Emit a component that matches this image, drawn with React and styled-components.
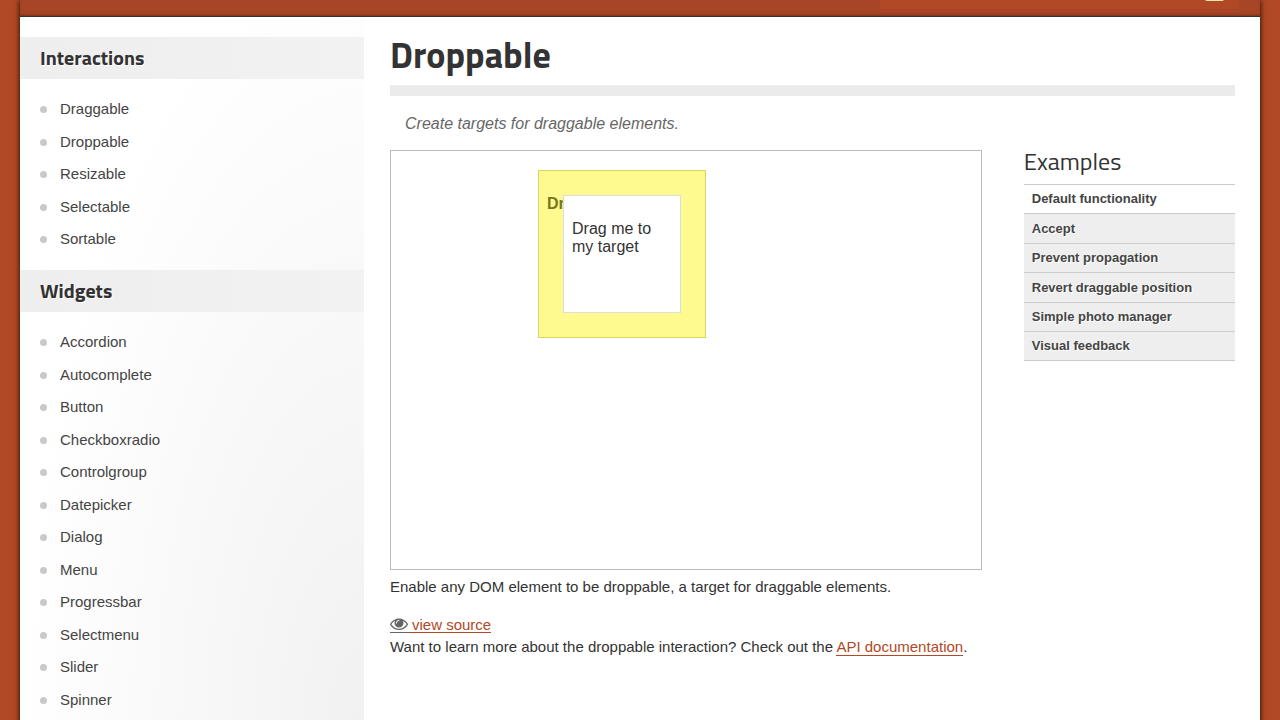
import React from "react";
import styled, { createGlobalStyle } from "styled-components";

const GlobalStyle = createGlobalStyle`
  * { box-sizing: border-box; }
  body {
    margin: 0;
    background: #b24926;
    color: #333;
    font: 15px/22px "Liberation Sans", Arial, sans-serif;
  }
  h1, h2, h3, p, ul { margin: 0; padding: 0; }
  ul { list-style: none; }
`;

const display = `"Titillium Web", Roboto, "Liberation Sans", sans-serif`;

const Container = styled.div`
  display: flex;
  flex-direction: column;
  min-height: 100vh;
  margin: 0 20px;
  box-shadow: 0 0 6px rgba(0, 0, 0, 0.9);
`;

const Header = styled.header`
  display: flex;
  justify-content: flex-end;
  height: 17px;
  padding-right: 21px;
  background: #a74526;
  border-bottom: 1px solid #333;
  box-shadow: inset 0 -2px 3px -1px rgba(60, 20, 0, 0.4);
`;

const SearchPanel = styled.div`
  display: flex;
  justify-content: flex-end;
  width: 359px;
  height: 9px;
  padding-right: 15px;
  background: #b24926;
  border-radius: 0 0 4px 4px;
`;

const Content = styled.div`
  display: flex;
  flex: 1;
  background: #fff;
`;

const Sidebar = styled.aside`
  flex: 0 0 344px;
  padding-top: 20px;
  background: radial-gradient(ellipse 344px 780px at 100% 100%, #f1f1f1, #fff);
`;

const SideHeading = styled.h3`
  padding: 0 20px;
  background: linear-gradient(90deg, #eee, #f2f2f2);
  font: bold 20px/42px ${display};
  text-shadow: 1px 1px 0 #fff;
`;

const SideList = styled.ul`
  display: flex;
  flex-direction: column;
  gap: 10px;
  padding: 19px 20px;
`;

const SideItem = styled.li`
  display: flex;
  align-items: center;
  gap: 13px;

  &:nth-child(odd) { margin-bottom: 1px; }

  &::before {
    content: "";
    width: 7px;
    height: 7px;
    border-radius: 50%;
    background: #c9c9c9;
  }
`;

const SideLink = styled.a`
  color: #444;
  text-decoration: none;
`;

const Main = styled.main`
  flex: 1;
  min-width: 0;
  padding: 16px 25px 20px 26px;
`;

const Title = styled.h1`
  padding-bottom: 8px;
  border-bottom: 11px solid #ebebeb;
  font: bold 36px/44px ${display};
`;

const Intro = styled.p`
  padding: 17px 15px 15px;
  color: #666;
  font-size: 16px;
  font-style: italic;
`;

const Columns = styled.div`
  display: flex;
  justify-content: space-between;
  align-items: flex-start;
`;

const DemoFrame = styled.section`
  position: relative;
  width: 70%;
  height: 420px;
  padding: 19px 147px;
  border: 1px solid #bbb;
  font-size: 16px;
  line-height: 18px;
`;

const DropTarget = styled.div`
  width: 168px;
  height: 168px;
  padding: 24px 8px;
  border: 1px solid #dad55e;
  background: #fffa90;
  color: #777620;
  font-weight: bold;
`;

const DragBox = styled.div`
  position: absolute;
  top: 44px;
  left: 172px;
  width: 118px;
  height: 118px;
  padding: 24px 8px;
  border: 1px solid #ddd;
  background: #fff;
  color: #333;
`;

const Examples = styled.nav`
  width: 25%;
`;

const ExamplesTitle = styled.h2`
  font: 400 24px/22px ${display};
  padding-bottom: 12px;
`;

const ExamplesList = styled.ul`
  border-top: 1px solid #ccc;
`;

const ExampleItem = styled.li`
  padding: 0 8px;
  border-bottom: 1px solid #ccc;
  background: ${(p) => (p.$active ? "#fff" : "#eee")};
  font-size: 13px;
  font-weight: bold;
  line-height: 28px;
  text-shadow: 1px 1px 0 #fff;

  &:nth-child(even):not(:last-child) { line-height: 29px; }
`;

const ExampleLink = styled.a`
  color: #444;
  text-decoration: none;
`;

const Description = styled.p`
  padding: 6px 0 16px;
`;

const SourceRow = styled.p`
  display: flex;
  align-items: center;
  height: 22px;
`;

const TextLink = styled.a`
  color: #b24926;
  border-bottom: 1px solid #b24926;
  text-decoration: none;
`;

const SourceLink = styled(TextLink)`
  display: flex;
  border: 0;
  line-height: 15px;
`;

const SourceIcon = styled.span`
  display: flex;
  color: #666;
  border-bottom: 1px solid #666;
`;

const SourceLabel = styled.span`
  padding-left: 4px;
  border-bottom: 1px solid #b24926;
`;

const groups = [
  ["Interactions", ["Draggable", "Droppable", "Resizable", "Selectable", "Sortable"]],
  ["Widgets", ["Accordion", "Autocomplete", "Button", "Checkboxradio", "Controlgroup", "Datepicker", "Dialog", "Menu", "Progressbar", "Selectmenu", "Slider", "Spinner"]],
];

const exampleNames = ["Default functionality", "Accept", "Prevent propagation", "Revert draggable position", "Simple photo manager", "Visual feedback"];

function EyeIcon() {
  return (
    <svg width="18" height="15" viewBox="0 230 1792 1493" fill="currentColor" aria-hidden="true">
      <path d="M1664 960q-152-236-381-353 61 104 61 225 0 185-131.5 316.5t-316.5 131.5-316.5-131.5-131.5-316.5q0-121 61-225-229 117-381 353 133 205 333.5 326.5t434.5 121.5 434.5-121.5 333.5-326.5zm-720-384q0-20-14-34t-34-14q-125 0-214.5 89.5t-89.5 214.5q0 20 14 34t34 14 34-14 14-34q0-86 61-147t147-61q20 0 34-14t14-34zm848 384q0 34-20 69-140 230-376.5 368.5t-499.5 138.5-499.5-139-376.5-368q-20-35-20-69t20-69q140-229 376.5-368t499.5-139 499.5 139 376.5 368q20 35 20 69z" />
    </svg>
  );
}

export default function App() {
  return (
    <>
      <GlobalStyle />
      <Container>
        <Header>
          <SearchPanel>
            <svg width="19" height="2" viewBox="0 0 19 2" aria-hidden="true">
              <path d="M0 0H19Q18 1 17 1H2Q1 1 0 0Z" fill="#fbe3b0" />
            </svg>
          </SearchPanel>
        </Header>
        <Content>
          <Sidebar>
            {groups.map(([name, items]) => (
              <section key={name}>
                <SideHeading>{name}</SideHeading>
                <SideList>
                  {items.map((item) => (
                    <SideItem key={item}>
                      <SideLink href="#">{item}</SideLink>
                    </SideItem>
                  ))}
                </SideList>
              </section>
            ))}
          </Sidebar>
          <Main>
            <Title>Droppable</Title>
            <Intro>Create targets for draggable elements.</Intro>
            <Columns>
              <DemoFrame>
                <DropTarget>
                  <p>Dropped!</p>
                </DropTarget>
                <DragBox>
                  <p>Drag me to my target</p>
                </DragBox>
              </DemoFrame>
              <Examples>
                <ExamplesTitle>Examples</ExamplesTitle>
                <ExamplesList>
                  {exampleNames.map((name, i) => (
                    <ExampleItem key={name} $active={i === 0}>
                      <ExampleLink href="#">{name}</ExampleLink>
                    </ExampleItem>
                  ))}
                </ExamplesList>
              </Examples>
            </Columns>
            <Description>Enable any DOM element to be droppable, a target for draggable elements.</Description>
            <SourceRow>
              <SourceLink href="#">
                <SourceIcon><EyeIcon /></SourceIcon>
                <SourceLabel>view source</SourceLabel>
              </SourceLink>
            </SourceRow>
            <p>
              Want to learn more about the droppable interaction? Check out the{" "}
              <TextLink href="#">API documentation</TextLink>.
            </p>
          </Main>
        </Content>
      </Container>
    </>
  );
}
